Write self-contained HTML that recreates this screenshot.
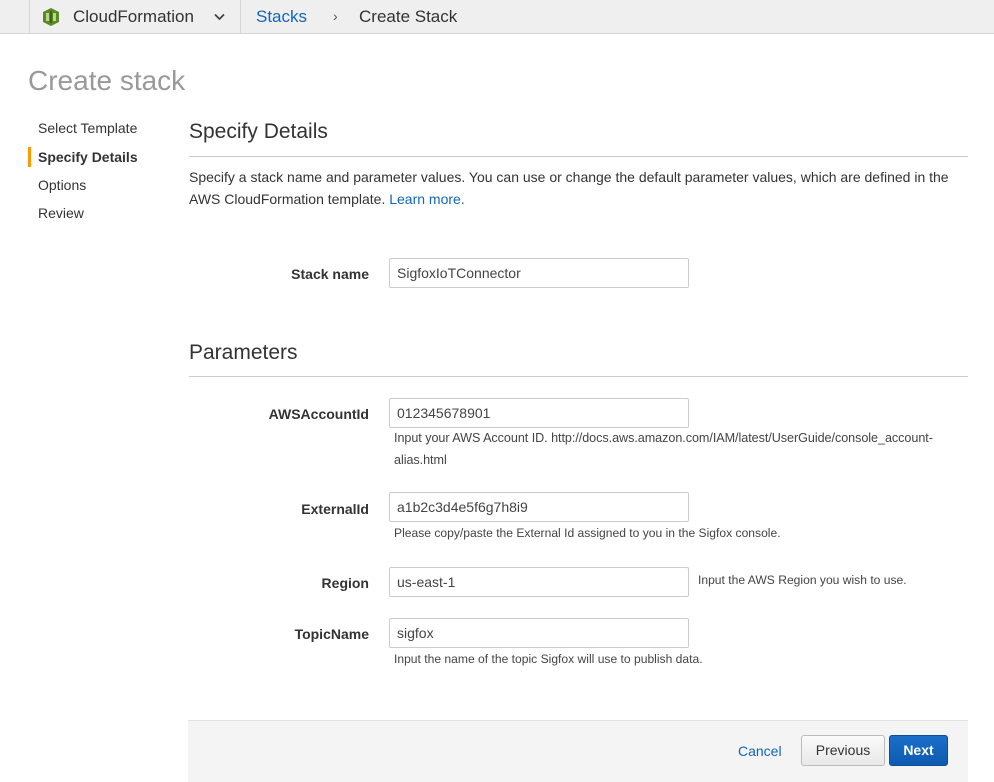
<!DOCTYPE html>
<html><head><meta charset="utf-8"><style>
*{box-sizing:border-box;margin:0;padding:0}
body{width:994px;height:782px;overflow:hidden;background:#fff;font-family:"Liberation Sans",Helvetica,Arial,sans-serif;color:#333;position:relative}
.top{position:absolute;left:0;top:0;width:994px;height:34px;background:#efefef;border-bottom:1px solid #d5d5d5}
.top .sep{position:absolute;top:0;width:1px;height:34px;background:#d5d5d5}
.abs{position:absolute;white-space:nowrap}
.lbl{position:absolute;font-weight:bold;font-size:14px;color:#333;text-align:right;right:625px}
.inp{position:absolute;left:389px;width:300px;height:30px;border:1px solid #ccc;border-radius:2px;font-size:14px;padding:6px 7px;color:#444;background:#fff}
.help{position:absolute;font-size:12.1px;color:#444;line-height:22px}
h2{position:absolute;left:189px;font-weight:normal;font-size:21px;color:#333}
.rule{position:absolute;left:189px;width:779px;height:1px;background:#ccc}
</style></head><body>
<div class="top">
  <div class="sep" style="left:29px"></div>
  <div class="sep" style="left:240px"></div>
  <svg class="abs" style="left:43px;top:8px" width="16" height="18" viewBox="0 0 16 18"><path d="M8 0L16 4V14L8 18L0 14V4Z" fill="#5a8a23"/><rect x="3" y="5" width="3" height="8" fill="#b6d68a"/><rect x="10" y="5" width="3" height="8" fill="#b6d68a"/><rect x="7" y="3" width="2" height="12" fill="#3d6515"/></svg>
  <div class="abs" style="left:73px;top:7px;font-size:17px;color:#333">CloudFormation</div>
  <svg class="abs" style="left:214px;top:13px" width="11" height="8"><path d="M1 1.5L5.5 6L10 1.5" stroke="#444" stroke-width="1.8" fill="none"/></svg>
  <div class="abs" style="left:256px;top:7px;font-size:17px;color:#1166bb">Stacks</div>
  <div class="abs" style="left:333px;top:8px;font-size:14px;color:#555">›</div>
  <div class="abs" style="left:359px;top:7px;font-size:17px;color:#333">Create Stack</div>
</div>
<div class="abs" style="left:28px;top:65px;font-size:28px;color:#999">Create stack</div>
<div class="abs" style="left:38px;top:120px;font-size:14px">Select Template</div>
<div class="abs" style="left:28px;top:147px;width:3px;height:20px;background:#f90"></div>
<div class="abs" style="left:38px;top:149px;font-size:14px;font-weight:bold">Specify Details</div>
<div class="abs" style="left:38px;top:177px;font-size:14px">Options</div>
<div class="abs" style="left:38px;top:205px;font-size:14px">Review</div>

<h2 style="top:120px">Specify Details</h2>
<div class="rule" style="top:156px"></div>
<div class="abs" style="left:189px;top:166px;font-size:14px;line-height:22px;white-space:normal;width:780px">Specify a stack name and parameter values. You can use or change the default parameter values, which are defined in the AWS CloudFormation template. <span style="color:#1166bb">Learn more.</span></div>

<div class="lbl" style="top:266px">Stack name</div>
<div class="inp" style="top:258px">SigfoxIoTConnector</div>

<h2 style="top:341px">Parameters</h2>
<div class="rule" style="top:376px"></div>

<div class="lbl" style="top:406px">AWSAccountId</div>
<div class="inp" style="top:398px">012345678901</div>
<div class="help" style="left:394px;top:427px;font-size:12.6px;letter-spacing:-0.05px">Input your AWS Account ID. http://docs.aws.amazon.com/IAM/latest/UserGuide/console_account-<br>alias.html</div>

<div class="lbl" style="top:501px">ExternalId</div>
<div class="inp" style="top:492px">a1b2c3d4e5f6g7h8i9</div>
<div class="help" style="left:394px;top:522px">Please copy/paste the External Id assigned to you in the Sigfox console.</div>

<div class="lbl" style="top:575px">Region</div>
<div class="inp" style="top:567px">us-east-1</div>
<div class="help" style="left:698px;top:569px">Input the AWS Region you wish to use.</div>

<div class="lbl" style="top:626px">TopicName</div>
<div class="inp" style="top:618px">sigfox</div>
<div class="help" style="left:394px;top:648px">Input the name of the topic Sigfox will use to publish data.</div>

<div class="abs" style="left:188px;top:720px;width:780px;height:62px;background:#f4f4f4;border-top:1px solid #e3e3e3"></div>
<div class="abs" style="left:738px;top:743px;font-size:14px;color:#1166bb">Cancel</div>
<div class="abs" style="left:801px;top:735px;width:84px;height:31px;border:1px solid #bbb;border-radius:3px;background:linear-gradient(#fafafa,#e8e8e8);font-size:14px;text-align:center;line-height:29px;color:#333">Previous</div>
<div class="abs" style="left:889px;top:735px;width:59px;height:31px;border:1px solid #0a4f9e;border-radius:3px;background:linear-gradient(#1a6fc9,#0d5bb0);font-size:14px;font-weight:bold;text-align:center;line-height:29px;color:#fff">Next</div>
</body></html>
